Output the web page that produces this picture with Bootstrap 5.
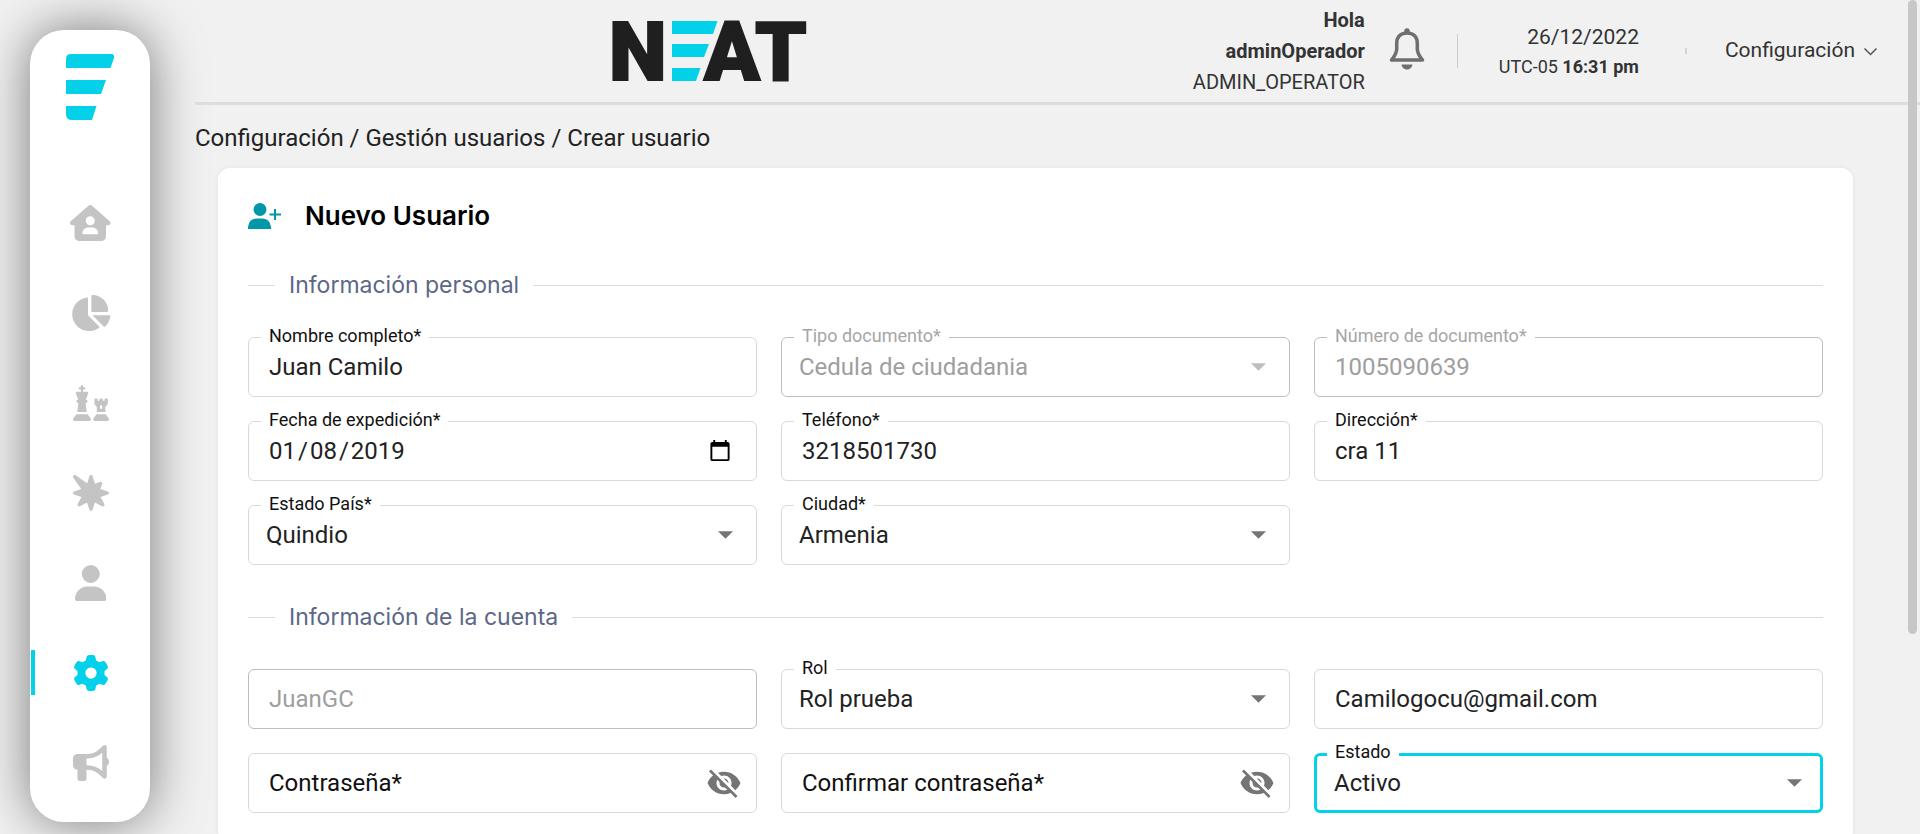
<!DOCTYPE html>
<html lang="es">
<head>
<meta charset="utf-8">
<meta name="viewport" content="width=device-width, initial-scale=1">
<title>NEAT - Crear usuario</title>
<link href="https://cdn.jsdelivr.net/npm/bootstrap@5.3.0/dist/css/bootstrap.min.css" rel="stylesheet">
<style>
  :root { --neat-cyan: #03d1e9; --neat-ink: #222; }
  body { background: #f1f1f1; color: var(--neat-ink); font-family: Roboto, sans-serif; }
  a { color: inherit; text-decoration: none; }

  /* Sidebar */
  .side-nav { width: 120px; height: 95vh; margin: 30px 45px 0 30px; border-radius: 34px; box-shadow: 0 0 52px rgba(0, 0, 0, .5); padding-top: 24px; color: #c4c4c4; }
  .side-brand { margin-bottom: 80px; }
  .side-link { height: 45px; margin-bottom: 45px; border-left: 4px solid transparent; border-right: 4px solid transparent; margin-left: 1px; }
  .side-link svg { height: 36px; fill: currentColor; }
  .side-link.active { color: var(--neat-cyan); border-left-color: var(--neat-cyan); }

  /* Header */
  .top-bar { height: 105px; border-bottom: 3px solid #ddd; padding-right: 42px; color: #333; font-size: 21px; }
  .brand-area { padding-left: 32px; }
  .brand-area text { font-family: Roboto, sans-serif; font-weight: 900; font-size: 82px; fill: #1f1f1f; stroke: #1f1f1f; stroke-width: 2px; }
  .user-box { font-size: 20px; line-height: 31px; }
  .clock-box { line-height: 29px; padding-top: 2px; }
  .fs-clock { font-size: 18px; }
  .rule-tall { width: 1px; height: 34px; background: #ccc; margin: 0 41px 0 32px; }
  .rule-short { width: 2px; height: 6px; background: #d4d4d4; margin: 0 38px 0 46px; }
  .bell-btn { margin-left: 24px; }

  /* Content */
  .crumbs { font-size: 24px; line-height: 36px; padding: 15px 0 12px; }
  .form-panel { border-radius: 12px; margin: 0 67px 0 23px; padding: 30px; box-shadow: 0 0 5px rgba(0, 0, 0, .06); }
  .panel-title { font: 600 26px/35px Inter, sans-serif; color: #000; }
  .section-rule { font: 400 23px/32px Inter, sans-serif; color: #5b6785; margin: 36px 0; gap: 14px; }
  .section-rule::before, .section-rule::after { content: ""; height: 1px; background: #dcdcdc; }
  .section-rule::before { width: 27px; }
  .section-rule::after { flex: 1; }

  /* Outlined field with a label set into its border */
  .field-box .form-control, .field-box .form-select { height: 60px; border: 1px solid #d9d9d9; border-radius: 6px; padding: 0 20px; font-size: 24px; color: var(--neat-ink); background-color: #fff; box-shadow: none; }
  .field-box .form-select { padding-left: 17px; background-size: 15px 8px; background-position: right 23px center; background-image: url("data:image/svg+xml,%3Csvg xmlns='http://www.w3.org/2000/svg' viewBox='0 0 10 5'%3E%3Cpath fill='%23757575' d='M0 0h10L5 5z'/%3E%3C/svg%3E"); }
  .field-box .form-control:disabled, .field-box .form-select:disabled { border-color: #bdbdbd; color: #9e9e9e; opacity: 1; }
  .field-box .form-select:disabled { background-image: url("data:image/svg+xml,%3Csvg xmlns='http://www.w3.org/2000/svg' viewBox='0 0 10 5'%3E%3Cpath fill='%23bdbdbd' d='M0 0h10L5 5z'/%3E%3C/svg%3E"); }
  .field-box .is-focused { border: 3px solid var(--neat-cyan); background-position: right 18px center; }
  .field-box .form-control::placeholder { color: #111; opacity: 1; }
  .field-box input[type=date]::-webkit-datetime-edit-text { padding: 0 2px; }
  .field-box input[type=date]::-webkit-calendar-picker-indicator { width: 24px; height: 24px; padding: 0; margin: 0 4px 0 0; }
  .notch { position: absolute; left: 13px; top: -13px; padding: 0 8px; background: #fff; font-size: 18px; line-height: 24px; color: #111; }
  .notch.muted-notch { color: #a6a6a6; }
  .eye-btn { position: absolute; right: 15px; top: 12px; }

  .scroll-thumb { position: absolute; right: 3px; top: 0; width: 9px; height: 76vh; border-radius: 5px; background: #c7c7c7; }
</style>
</head>
<body>
<div class="d-flex vh-100 overflow-hidden position-relative">

  <aside class="side-nav bg-white flex-shrink-0">
    <a href="#" class="side-brand d-flex justify-content-center" aria-label="NEAT">
      <svg width="48" height="66" viewBox="0 0 48 66" fill="#03d1e9"><path d="M5 0H45Q49 0 48 4L44.500 14H0V5Q0 0 5 0zM0 26H40L35 40H0zM0 52H30.500L26 66H6Q0 66 0 60z"/></svg>
    </a>
    <nav class="d-flex flex-column" aria-label="Principal">
      <a href="#" class="side-link d-flex align-items-center justify-content-center" aria-label="Inicio"><svg viewBox="0 0 576 512"><path d="M575.8 255.500c0 18-15 32.100-32 32.100h-32l.7 160.200c.2 35.500-28.500 64.300-64 64.300H128.100c-35.300 0-64-28.700-64-64V287.600H32c-18 0-32-14-32-32.100c0-9 3-17 10-24L266.400 8c7-7 15-8 22-8s15 2 21 7L564.800 231.500c8 7 12 15 11 24zM352 224c0-35.300-28.700-64-64-64s-64 28.700-64 64s28.700 64 64 64s64-28.700 64-64zm-96 96c-44.200 0-80 35.800-80 80c0 8.800 7.200 16 16 16H384c8.800 0 16-7.200 16-16c0-44.200-35.800-80-80-80H256z"/></svg></a>
      <a href="#" class="side-link d-flex align-items-center justify-content-center" aria-label="Reportes"><svg viewBox="0 0 576 512"><path d="M304 240V16.600c0-9 7-16.600 16-16.600C443.700 0 544 100.300 544 224c0 9-7.600 16-16.600 16H304zM32 272C32 150.700 122.100 50.300 239 34.300c9.200-1.300 17 6.100 17 15.400V288L412.500 444.500c6.700 6.700 6.200 17.700-1.500 23.100C371.800 495.600 323.800 512 272 512C139.500 512 32 404.600 32 272zm526.400 16c9.300 0 16.600 7.800 15.400 17c-7.700 55.900-34.600 105.600-73.900 142.300c-6 5.600-15.400 5.200-21.200-.7L320 288H558.400z"/></svg></a>
      <a href="#" class="side-link d-flex align-items-center justify-content-center" aria-label="Estrategia"><svg viewBox="0 0 512 512"><path d="M144 16c0-8.800-7.200-16-16-16s-16 7.200-16 16V32H96c-8.800 0-16 7.200-16 16s7.200 16 16 16h16V96H60.200C49.100 96 40 105.100 40 116.200c0 2.500 .5 4.900 1.300 7.300L73.800 208H72c-13.300 0-24 10.700-24 24s10.700 24 24 24h4L60 384H196L180 256h4c13.300 0 24-10.700 24-24s-10.700-24-24-24h-1.800l32.500-84.500c.9-2.300 1.300-4.800 1.300-7.300c0-11.200-9.100-20.200-20.200-20.200H144V64h16c8.800 0 16-7.200 16-16s-7.200-16-16-16H144V16zM48 416L4.800 473.600C1.700 477.800 0 482.800 0 488c0 13.300 10.700 24 24 24H232c13.300 0 24-10.700 24-24c0-5.200-1.700-10.200-4.800-14.400L208 416H48zm288 0l-43.200 57.600c-3.100 4.200-4.800 9.200-4.800 14.400c0 13.300 10.700 24 24 24H488c13.300 0 24-10.700 24-24c0-5.200-1.700-10.200-4.800-14.400L464 416H336zM304 208v51.900c0 7.800 2.800 15.300 8 21.100L339.200 312 337 384H462.500l-3.300-72 28.300-30.800c5.400-5.900 8.500-13.600 8.500-21.700V208c0-8.800-7.200-16-16-16H464c-8.800 0-16 7.200-16 16v16H424V208c0-8.800-7.200-16-16-16H392c-8.800 0-16 7.200-16 16v16H352V208c0-8.800-7.200-16-16-16H320c-8.800 0-16 7.200-16 16zm80 96c0-8.800 7.200-16 16-16s16 7.200 16 16v32H384V304z"/></svg></a>
      <a href="#" class="side-link d-flex align-items-center justify-content-center" aria-label="Eventos"><svg viewBox="0 0 512 512"><path d="M37.600 4.200C28-2.300 15.200-1.100 7 7s-9.400 21-2.800 30.500l112 163.300L16.600 233.200C6.700 236.400 0 245.600 0 256s6.700 19.600 16.600 22.800l103.100 33.400L66.800 412.800c-4.900 9.300-3.200 20.700 4.300 28.100s18.800 9.200 28.100 4.300l100.600-52.900 33.400 103.100c3.200 9.900 12.400 16.600 22.800 16.600s19.600-6.700 22.800-16.600l33.400-103.100 100.600 52.900c9.300 4.900 20.700 3.200 28.100-4.300s9.200-18.800 4.300-28.100L392.300 312.200l103.100-33.400c9.900-3.200 16.600-12.400 16.600-22.800s-6.700-19.600-16.600-22.800L388.900 198.700l25.700-70.400c3.200-8.800 1-18.600-5.600-25.200s-16.400-8.800-25.200-5.600l-70.400 25.700L278.800 16.600C275.600 6.700 266.400 0 256 0s-19.600 6.700-22.800 16.600l-32.300 99.600L37.600 4.200z"/></svg></a>
      <a href="#" class="side-link d-flex align-items-center justify-content-center" aria-label="Perfil"><svg viewBox="0 0 448 512"><path d="M224 256A128 128 0 1 0 224 0a128 128 0 1 0 0 256zm-45.700 48C79.800 304 0 383.800 0 482.300C0 498.700 13.300 512 29.700 512H418.300c16.400 0 29.700-13.300 29.700-29.700C448 383.800 368.200 304 269.700 304H178.300z"/></svg></a>
      <a href="#" class="side-link active d-flex align-items-center justify-content-center" aria-label="Configuración" aria-current="page"><svg viewBox="0 0 512 512"><path d="M495.900 166.600c3.200 8.700 .5 18.400-6.400 24.600l-43.300 39.400c1.100 8.300 1.700 16.800 1.700 25.400s-.6 17.100-1.700 25.400l43.300 39.400c6.900 6.200 9.600 15.900 6.400 24.600c-4.400 11.900-9.700 23.300-15.800 34.300l-4.700 8.100c-6.600 11-14 21.400-22.100 31.200c-5.900 7.200-15.700 9.600-24.500 6.800l-55.700-17.700c-13.400 10.300-28.200 18.900-44 25.400l-12.500 57.100c-2 9.100-9 16.300-18.200 17.800c-13.800 2.300-28 3.500-42.500 3.500s-28.700-1.200-42.500-3.500c-9.200-1.500-16.200-8.700-18.200-17.800l-12.500-57.100c-15.800-6.500-30.600-15.100-44-25.400L83.100 425.900c-8.800 2.800-18.600 .3-24.500-6.800c-8.100-9.800-15.500-20.200-22.100-31.200l-4.700-8.100c-6.100-11-11.400-22.400-15.800-34.300c-3.200-8.700-.5-18.400 6.400-24.600l43.300-39.400C64.600 273.100 64 264.600 64 256s.6-17.100 1.700-25.400L22.400 191.200c-6.900-6.200-9.600-15.900-6.400-24.600c4.400-11.900 9.700-23.300 15.800-34.300l4.700-8.100c6.600-11 14-21.400 22.100-31.200c5.900-7.200 15.700-9.600 24.500-6.800l55.700 17.700c13.400-10.300 28.200-18.900 44-25.400l12.500-57.100c2-9.100 9-16.300 18.200-17.800C227.300 1.200 241.500 0 256 0s28.700 1.200 42.500 3.500c9.200 1.500 16.200 8.700 18.200 17.800l12.500 57.100c15.800 6.500 30.600 15.100 44 25.400l55.700-17.700c8.800-2.800 18.600-.3 24.500 6.800c8.100 9.800 15.500 20.200 22.100 31.200l4.700 8.100c6.100 11 11.400 22.400 15.800 34.300zM256 336a80 80 0 1 0 0-160 80 80 0 1 0 0 160z"/></svg></a>
      <a href="#" class="side-link d-flex align-items-center justify-content-center" aria-label="Anuncios"><svg viewBox="0 0 512 512"><path d="M480 32c0-12.900-7.800-24.600-19.800-29.600s-25.700-2.200-34.900 6.900L381.700 53c-48 48-113.100 75-181 75H192 160 64c-35.300 0-64 28.700-64 64v96c0 35.300 28.700 64 64 64l0 128c0 17.700 14.300 32 32 32h64c17.700 0 32-14.300 32-32V352l8.700 0c67.900 0 133 27 181 75l43.600 43.600c9.200 9.200 22.900 11.900 34.900 6.900s19.800-16.600 19.800-29.600V300.400c18.600-8.800 32-32.500 32-60.400s-13.400-51.600-32-60.400V32zm-64 76.700V240 371.300C357.200 317.800 280.500 288 200.700 288H192V192h8.700c79.800 0 156.500-29.800 215.300-83.300z"/></svg></a>
    </nav>
  </aside>

  <div class="flex-grow-1">
    <header class="top-bar d-flex align-items-center">
      <a href="#" class="brand-area flex-grow-1 d-flex justify-content-center" aria-label="NEAT">
        <svg width="194" height="60" viewBox="0 0 194 60" overflow="visible">
          <text x="-4" y="59">N</text>
          <path fill="#03d1e9" d="M59 0h45.500L100 13H59zM59 23h37L91 36H59zM59 47h28.500L83 60H59z"/>
          <text x="91" y="59">A</text>
          <text x="142" y="59">T</text>
        </svg>
      </a>
      <div class="user-box text-end">
        <div class="fw-bold">Hola</div>
        <div class="fw-bold">adminOperador</div>
        <div>ADMIN_OPERATOR</div>
      </div>
      <button type="button" class="bell-btn btn p-0 pb-1 border-0 lh-1" aria-label="Notificaciones">
        <svg width="36" height="42" viewBox="0 0 36 42" fill="none" stroke="#6f6f6f" stroke-width="3.500" stroke-linejoin="round"><path d="M18 5C11 5 7.700 9.500 7.700 15.500V21C7.700 26 5 28.500 2.500 32H33.500C31 28.500 28.300 26 28.300 21V15.500C28.300 9.500 25 5 18 5z"/><path stroke="none" fill="#6f6f6f" d="M15.300 5V3a2.700 2.700 0 0 1 5.400 0V5zM12.500 36.500H23.500C23 40 20.500 41.500 18 41.500S13 40 12.500 36.500z"/></svg>
      </button>
      <span class="rule-tall"></span>
      <div class="clock-box text-end">
        <div>26/12/2022</div>
        <div class="fs-clock">UTC-05 <strong>16:31 pm</strong></div>
      </div>
      <span class="rule-short"></span>
      <a href="#" class="d-flex align-items-center gap-2">Configuración
        <svg width="15" height="9" viewBox="0 0 15 9" fill="none" stroke="#555" stroke-width="1.500"><path d="M1.500 1.500l6 6 6-6"/></svg>
      </a>
    </header>

    <main>
      <nav class="crumbs" aria-label="Ruta"><a href="#">Configuración</a> / <a href="#">Gestión usuarios</a> / <a href="#" aria-current="page">Crear usuario</a></nav>

      <form class="form-panel bg-white">
        <h1 class="panel-title d-flex align-items-center mb-0">
          <svg class="me-4" width="33" height="26" viewBox="0 0 33 26" fill="#0097a9"><circle cx="12" cy="6.500" r="6.500"/><path d="M0 26V24Q1 15.500 9 15.500h5Q22 15.500 23 24v2zM26 6h2v4.500h5v2h-5V17h-2v-4.500h-4.500v-2H26z"/></svg>
          Nuevo Usuario
        </h1>

        <h2 class="section-rule d-flex align-items-center">Información personal</h2>
        <div class="row g-4">
          <div class="col-4"><div class="field-box position-relative"><input id="nombre" class="form-control" type="text" value="Juan Camilo"><label class="notch" for="nombre">Nombre completo*</label></div></div>
          <div class="col-4"><div class="field-box position-relative"><select id="tipo" class="form-select" disabled><option>Cedula de ciudadania</option></select><label class="notch muted-notch" for="tipo">Tipo documento*</label></div></div>
          <div class="col-4"><div class="field-box position-relative"><input id="numero" class="form-control" type="text" value="1005090639" disabled><label class="notch muted-notch" for="numero">Número de documento*</label></div></div>
          <div class="col-4"><div class="field-box position-relative"><input id="fecha" class="form-control" type="date" value="2019-01-08"><label class="notch" for="fecha">Fecha de expedición*</label></div></div>
          <div class="col-4"><div class="field-box position-relative"><input id="telefono" class="form-control" type="tel" value="3218501730"><label class="notch" for="telefono">Teléfono*</label></div></div>
          <div class="col-4"><div class="field-box position-relative"><input id="direccion" class="form-control" type="text" value="cra 11"><label class="notch" for="direccion">Dirección*</label></div></div>
          <div class="col-4"><div class="field-box position-relative"><select id="pais" class="form-select"><option>Quindio</option></select><label class="notch" for="pais">Estado País*</label></div></div>
          <div class="col-4"><div class="field-box position-relative"><select id="ciudad" class="form-select"><option>Armenia</option></select><label class="notch" for="ciudad">Ciudad*</label></div></div>
        </div>

        <h2 class="section-rule d-flex align-items-center">Información de la cuenta</h2>
        <div class="row g-4">
          <div class="col-4"><div class="field-box position-relative"><input class="form-control" type="text" value="JuanGC" aria-label="Usuario" disabled></div></div>
          <div class="col-4"><div class="field-box position-relative"><select id="rol" class="form-select"><option>Rol prueba</option></select><label class="notch" for="rol">Rol</label></div></div>
          <div class="col-4"><div class="field-box position-relative"><input class="form-control" type="email" value="Camilogocu@gmail.com" aria-label="Correo"></div></div>
          <div class="col-4"><div class="field-box position-relative"><input class="form-control" type="password" placeholder="Contraseña*" aria-label="Contraseña">
            <button type="button" class="eye-btn btn p-0 border-0 lh-1" aria-label="Mostrar contraseña"><svg width="36" height="36" viewBox="0 0 24 24" fill="#757575"><path d="M12 7c2.760 0 5 2.240 5 5 0 .65-.13 1.260-.36 1.830l2.920 2.920c1.510-1.260 2.700-2.890 3.430-4.750-1.730-4.390-6-7.500-11-7.500-1.400 0-2.740.25-3.980.7l2.160 2.160C10.740 7.130 11.350 7 12 7zM2 4.270l2.280 2.280.46.46C3.080 8.300 1.780 10.020 1 12c1.730 4.390 6 7.500 11 7.500 1.550 0 3.030-.3 4.380-.84l.42.42L19.730 22 21 20.730 3.270 3 2 4.270zM7.530 9.800l1.550 1.550c-.05.21-.08.43-.08.65 0 1.660 1.340 3 3 3 .22 0 .44-.03.65-.08l1.550 1.550c-.67.33-1.410.53-2.200.53-2.760 0-5-2.240-5-5 0-.79.2-1.530.53-2.200zm4.310-.78l3.150 3.150.02-.16c0-1.660-1.340-3-3-3l-.17.01z"/></svg></button></div></div>
          <div class="col-4"><div class="field-box position-relative"><input class="form-control" type="password" placeholder="Confirmar contraseña*" aria-label="Confirmar contraseña">
            <button type="button" class="eye-btn btn p-0 border-0 lh-1" aria-label="Mostrar confirmación"><svg width="36" height="36" viewBox="0 0 24 24" fill="#757575"><path d="M12 7c2.760 0 5 2.240 5 5 0 .65-.13 1.260-.36 1.830l2.920 2.920c1.510-1.260 2.700-2.890 3.430-4.750-1.730-4.390-6-7.500-11-7.500-1.400 0-2.740.25-3.980.7l2.160 2.160C10.740 7.130 11.350 7 12 7zM2 4.270l2.280 2.280.46.46C3.080 8.300 1.780 10.020 1 12c1.730 4.390 6 7.500 11 7.500 1.550 0 3.030-.3 4.380-.84l.42.42L19.730 22 21 20.730 3.270 3 2 4.270zM7.530 9.800l1.550 1.550c-.05.21-.08.43-.08.65 0 1.660 1.340 3 3 3 .22 0 .44-.03.65-.08l1.550 1.550c-.67.33-1.410.53-2.200.53-2.760 0-5-2.240-5-5 0-.79.2-1.530.53-2.200zm4.310-.78l3.150 3.150.02-.16c0-1.660-1.340-3-3-3l-.17.01z"/></svg></button></div></div>
          <div class="col-4"><div class="field-box position-relative"><select id="estado" class="form-select is-focused"><option>Activo</option></select><label class="notch" for="estado">Estado</label></div></div>
        </div>
      </form>
    </main>
  </div>
  <div class="scroll-thumb" aria-hidden="true"></div>
</div>
<script src="https://cdn.jsdelivr.net/npm/bootstrap@5.3.0/dist/js/bootstrap.bundle.min.js"></script>
</body>
</html>
